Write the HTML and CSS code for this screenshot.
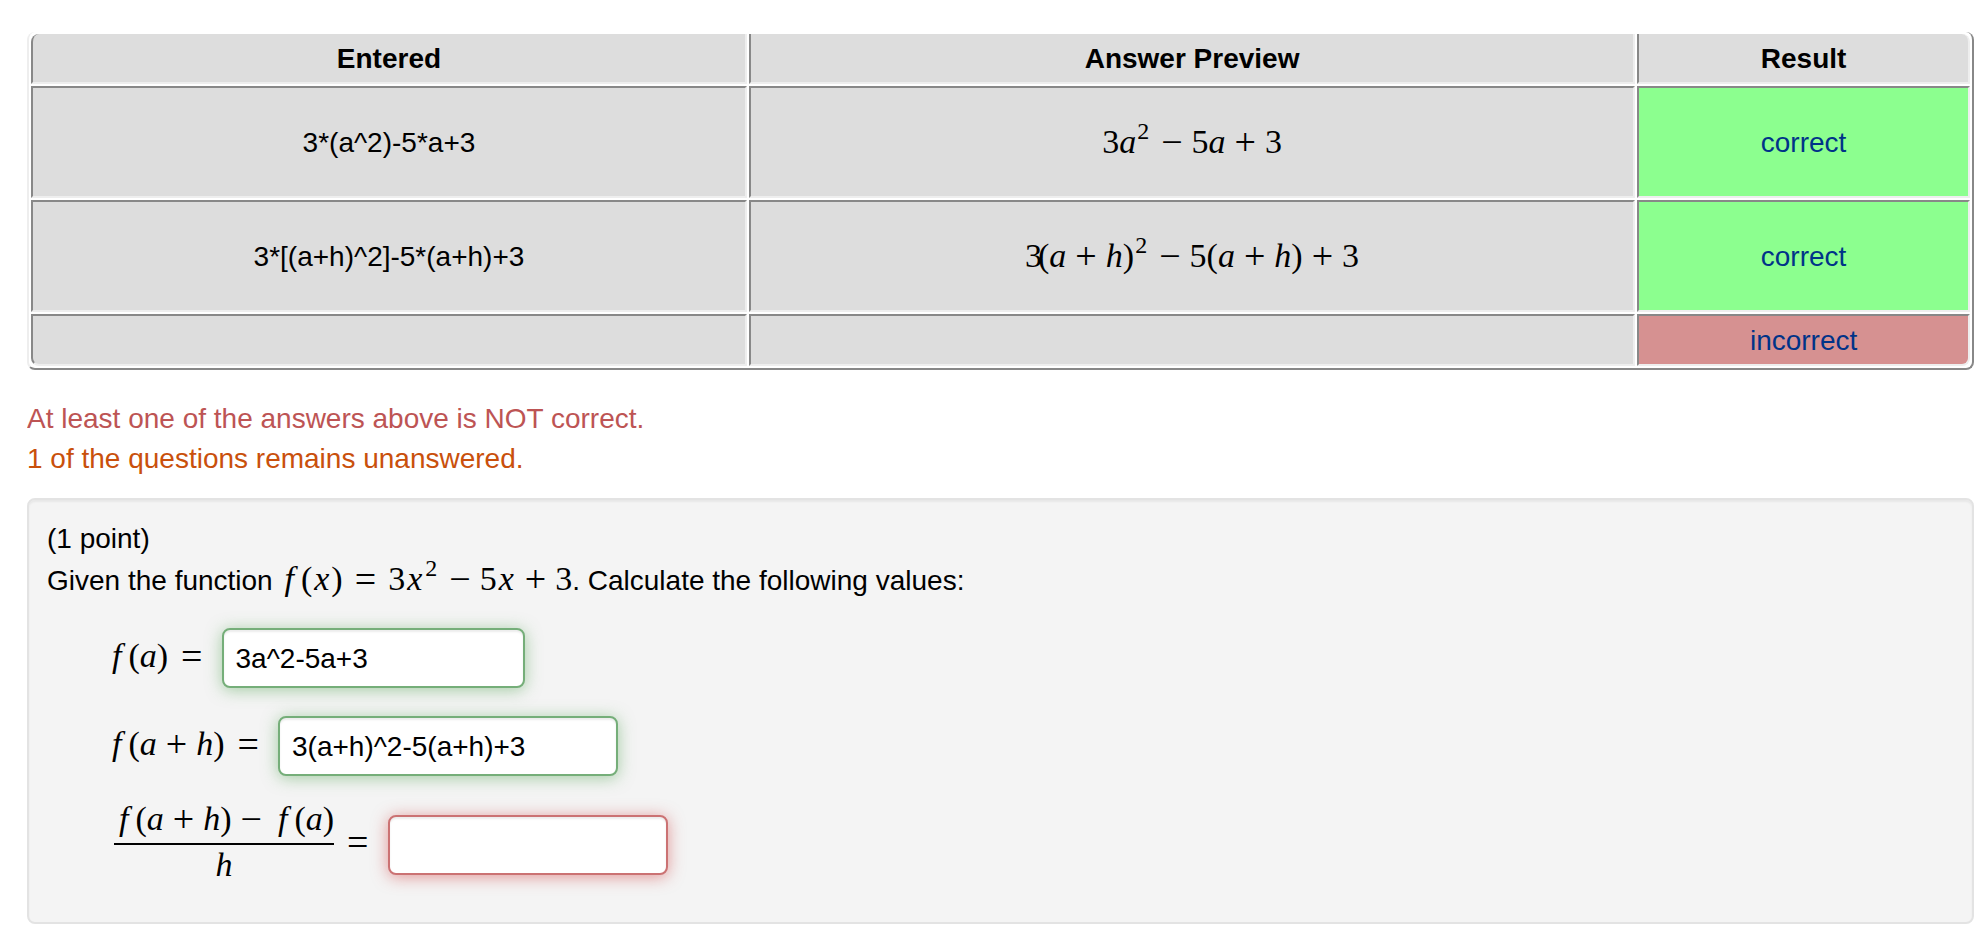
FILE: index.html
```html
<!DOCTYPE html>
<html lang="en">
<head>
    <meta charset="UTF-8">
    <meta name="viewport" content="width=device-width, initial-scale=1.0">
    <title>Problem</title>
    <link rel="stylesheet" href="styles.css">
</head>
<body>
    <!-- results of the submitted answers -->
    <table class="results">
        <colgroup>
            <col class="col_entered">
            <col>
            <col class="col_result">
        </colgroup>
        <tr>
            <th>Entered</th>
            <th>Answer Preview</th>
            <th>Result</th>
        </tr>
        <tr class="tall">
            <td>3*(a^2)-5*a+3</td>
            <td><span class="math">3<i>a</i><sup>2</sup><b>−</b>5<i>a</i><b>+</b>3</span></td>
            <td class="correct"><a href="#AnSwEr1">correct</a></td>
        </tr>
        <tr class="tall">
            <td>3*[(a+h)^2]-5*(a+h)+3</td>
            <td><span class="math"><span class="tight">3</span>(<i>a</i><b>+</b><i>h</i>)<sup>2</sup><b>−</b>5(<i>a</i><b>+</b><i>h</i>)<b>+</b>3</span></td>
            <td class="correct"><a href="#AnSwEr2">correct</a></td>
        </tr>
        <tr>
            <td></td>
            <td></td>
            <td class="incorrect"><a href="#AnSwEr3">incorrect</a></td>
        </tr>
    </table>

    <div class="messages">
        <div class="msg_wrong">At least one of the answers above is NOT correct.</div>
        <div class="msg_blank">1 of the questions remains unanswered.</div>
    </div>

    <!-- problem body -->
    <div class="problem">
        <div>(1 point)</div>
        <div class="question">Given the function <span class="math"><i class="f">f</i>(<i class="x">x</i>)<b class="eq">=</b>3<i class="x">x</i><sup>2</sup><b>−</b>5<i class="x">x</i><b>+</b>3</span>. Calculate the following values:</div>
        <form class="answers">
            <div class="answer">
                <label class="math" for="AnSwEr1"><i class="f">f</i>(<i>a</i>)<b class="eq">=</b></label>
                <input type="text" id="AnSwEr1" class="box_a ok" value="3a^2-5a+3">
            </div>
            <div class="answer">
                <label class="math" for="AnSwEr2"><i class="f">f</i>(<i>a</i><b>+</b><i>h</i>)<b class="eq">=</b></label>
                <input type="text" id="AnSwEr2" class="box_b ok" value="3(a+h)^2-5(a+h)+3">
            </div>
            <div class="answer">
                <label class="math quotient" for="AnSwEr3">
                    <span class="fraction">
                        <span class="top"><i class="f">f</i>(<i>a</i><b>+</b><i>h</i>)<b>−</b><i class="f">f</i>(<i>a</i>)</span>
                        <span class="bottom"><i>h</i></span>
                    </span>
                    <b class="eq">=</b>
                </label>
                <input type="text" id="AnSwEr3" class="box_c bad" value="">
            </div>
        </form>
    </div>
</body>
</html>
```

FILE: styles.css
```css
* {
    box-sizing: border-box;
}
body {
    margin: 32px 11px 16px 27px;
    background-color: #fff;
    color: #000;
    font-family: "Liberation Sans", Arial, sans-serif;
    font-size: 28px;
    line-height: 40px;
}

/* results table */
.results {
    width: 100%;
    table-layout: fixed;
    border: 2px solid;
    border-color: #eee #888 #888 #eee;
    border-top: 0;
    border-radius: 8px;
    border-collapse: separate;
    border-spacing: 2px;
    text-align: center;
}
.col_entered {
    width: 37%;
}
.col_result {
    width: 17.2%;
}
.results th, .results td {
    height: 52px;
    padding: 5px 4px 3px;
    background-color: #ddd;
    border: 2px solid;
    border-color: #888 #eee #eee #888;
}
.results th {
    height: 50px;
    border-top: 0;
}
.results .tall td {
    height: 112px;
}
.results th:first-child {
    border-top-left-radius: 8px;
}
.results th:last-child {
    border-top-right-radius: 8px;
}
.results tr:last-child td:first-child {
    border-bottom-left-radius: 8px;
}
.results tr:last-child td:last-child {
    border-bottom-right-radius: 8px;
}
.results .correct {
    background-color: #8cff8f;
}
.results .incorrect {
    background-color: #d69191;
}
a {
    color: #038;
    text-decoration: none;
}

/* formulas */
.math {
    font-family: "Liberation Serif", "Times New Roman", serif;
    font-size: 34px;
    line-height: 40px;
    white-space: nowrap;
}
.math b {
    font-size: 38px;
    font-weight: normal;
    line-height: 0;
    vertical-align: -2px;
    margin: 0 9px;
}
.math .eq {
    margin: 0 12px;
}
.math sup {
    font-size: 24px;
    line-height: 0;
    vertical-align: 14px;
    margin: 0 3px 0 1px;
}
.math .x {
    margin: 0 2px;
}
.math .f {
    margin: 0 7px 0 1px;
}
.math b + .f {
    margin-left: 7px;
}
.math .tight {
    margin-right: -4px;
}

/* messages */
.messages {
    margin: 29px 0 19px;
}
.msg_wrong {
    color: #bd5454;
}
.msg_blank {
    color: #c9500c;
}

/* problem */
.problem {
    padding: 19px 18px 36px;
    background-color: #f4f4f4;
    border: 2px solid #e3e3e3;
    border-radius: 8px;
    box-shadow: inset 0 2px 2px rgba(0, 0, 0, 0.05);
}
.question {
    line-height: 44px;
}
.question .math {
    margin-left: 3px;
}
.answers {
    display: flex;
    flex-direction: column;
    gap: 28px;
    margin: 25px 0 0 64px;
}
.answer {
    display: flex;
    align-items: center;
}
.answer label {
    padding-bottom: 4px;
}
.answer .eq {
    margin: 0 19px 0 13px;
}
.answer .quotient {
    display: flex;
    align-items: center;
    height: 82px;
    padding-bottom: 6px;
}
.fraction {
    display: inline-flex;
    flex-direction: column;
    text-align: center;
    margin: 0 0 0 3px;
}
.top {
    padding: 0 0 4px 4px;
    border-bottom: 2px solid #000;
}
input {
    height: 60px;
    padding: 10px 12px 8px;
    background-color: #fff;
    border: 2px solid;
    border-radius: 8px;
    color: #000;
    font-family: inherit;
    font-size: 28px;
}
.box_a {
    width: 303px;
}
.box_b {
    width: 340px;
}
.box_c {
    width: 280px;
}
.ok {
    border-color: #75ae79;
    box-shadow: inset 0 2px 2px rgba(0, 0, 0, 0.08), 0 2px 16px rgba(81, 163, 81, 0.5);
}
.bad {
    border-color: #cb7273;
    box-shadow: inset 0 2px 2px rgba(0, 0, 0, 0.08), 0 2px 16px rgba(210, 60, 60, 0.5);
}
```
